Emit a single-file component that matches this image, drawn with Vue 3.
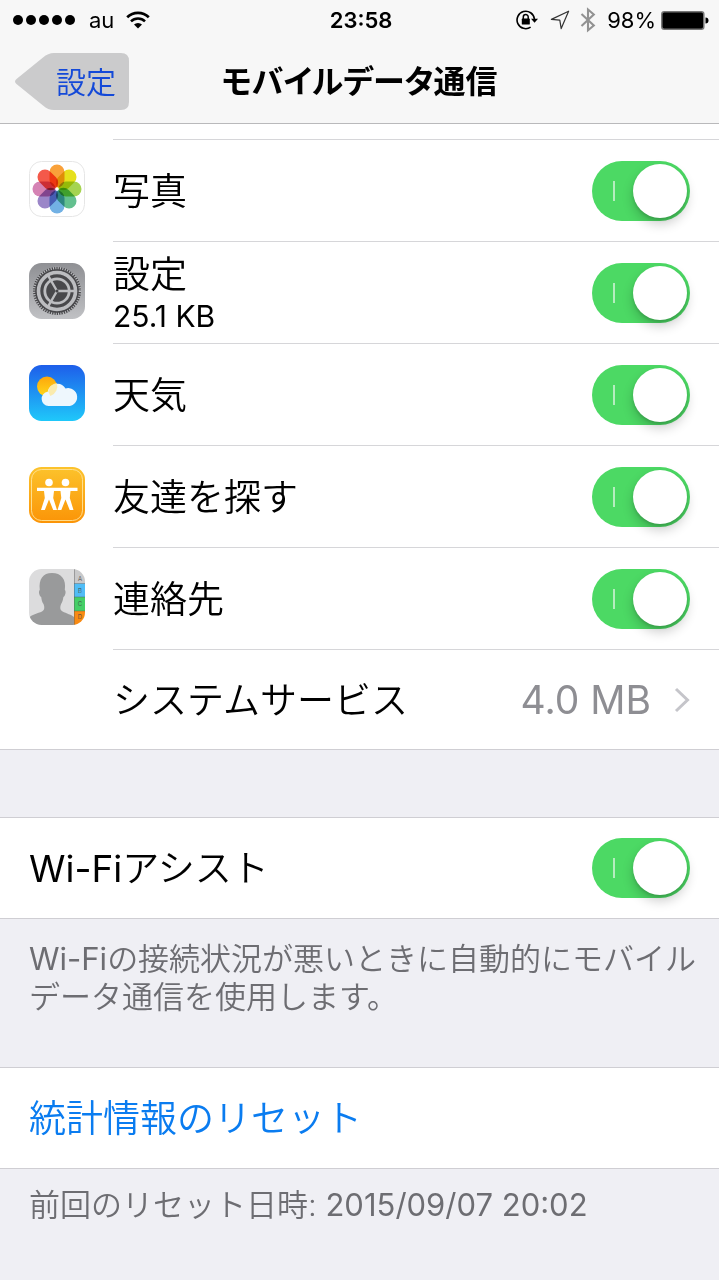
<template>
  <div class="screen">
    <header class="top-bar">
      <div class="status-bar">
        <div class="status-left">
          <div class="signal">
            <i v-for="n in 5" :key="n" class="signal-dot"></i>
          </div>
          <span class="carrier">au</span>
          <svg class="wifi" width="24" height="18" viewBox="0 0 24 18" fill="none" stroke="#000">
            <path d="M1.2 6.2a15.5 15.5 0 0 1 21.6 0" stroke-width="2.7" />
            <path d="M5 10.4a10 10 0 0 1 14 0" stroke-width="2.5" />
            <path d="M12 17.6l-4-4.1a5.8 5.8 0 0 1 8 0z" fill="#000" stroke="none" />
          </svg>
        </div>
        <span class="clock">23:58</span>
        <div class="status-right">
          <svg width="22" height="20" viewBox="0 0 22 20" fill="none" stroke="#000">
            <path d="M14.6 17.2A8.7 8.7 0 1 1 18.4 9" stroke-width="1.6" />
            <path d="M15 8.8h7l-3.5 4z" fill="#000" stroke="none" />
            <rect x="5.8" y="8.6" width="8" height="6" rx="0.6" fill="#000" stroke="none" />
            <path d="M7.3 9V7a2.4 2.4 0 0 1 4.9 0v2" stroke-width="1.5" />
          </svg>
          <svg class="location" width="20" height="20" viewBox="0 0 20 20" fill="none" stroke="#333" stroke-width="1.2">
            <path d="M18.6 1.2L1.4 9.4l8.4.8 1.4 8.4z" stroke-linejoin="round" />
          </svg>
          <svg class="bluetooth" width="16" height="26" viewBox="0 0 16 26" fill="none" stroke="#929292" stroke-width="2.1">
            <path d="M1.5 7l12.3 11.5L8 23.3V2.5l5.8 5L1.5 19" />
          </svg>
          <span class="percent">98%</span>
          <svg width="48" height="19" viewBox="0 0 48 19">
            <rect x="0.8" y="0.8" width="42" height="17.4" rx="2.5" fill="#000" stroke="#777" stroke-width="1.5" />
            <path d="M44.5 6.5q3 0 3 3t-3 3z" fill="#000" />
          </svg>
        </div>
      </div>
      <nav class="nav-bar">
        <button type="button" class="back">
          <svg class="back-shape" viewBox="0 0 114 57" preserveAspectRatio="none">
            <path
              d="M1.5 26L28 4.5Q33 0 39 0H106q8 0 8 8V49q0 8-8 8H39q-6 0-11-4.5L1.5 31q-3-2.5 0-5z"
              fill="#cbcbcc"
            />
          </svg>
          <span class="back-text">設定</span>
        </button>
        <h1>モバイルデータ通信</h1>
      </nav>
    </header>

    <main>
      <section class="group app-group">
        <div class="row-tail"><div class="row-tail-line"></div></div>
        <div v-for="app in apps" :key="app.id" class="app-row">
          <svg class="app-icon" width="56" height="56" viewBox="0 0 56 56">
            <defs>
              <linearGradient id="metal" x1="0" y1="0" x2="0" y2="1">
                <stop offset="0" stop-color="#8f9094" />
                <stop offset="1" stop-color="#c0c1c4" />
              </linearGradient>
              <linearGradient id="sky" x1="0" y1="0" x2="0" y2="1">
                <stop offset="0" stop-color="#1e5eea" />
                <stop offset="1" stop-color="#1fc8fa" />
              </linearGradient>
              <linearGradient id="orange" x1="0" y1="0" x2="0" y2="1">
                <stop offset="0" stop-color="#fcc32c" />
                <stop offset="1" stop-color="#fb9407" />
              </linearGradient>
              <linearGradient id="sun" x1="0" y1="0" x2="0" y2="1">
                <stop offset="0" stop-color="#fda60c" />
                <stop offset="1" stop-color="#ffd91a" />
              </linearGradient>
              <clipPath id="tile"><rect width="56" height="56" rx="12.5" /></clipPath>
            </defs>

            <g v-if="app.id === 'photos'">
              <rect x="0.5" y="0.5" width="55" height="55" rx="12" fill="#fff" stroke="#e6e6e6" />
              <g class="petals">
                <rect
                  v-for="(color, i) in petals"
                  :key="color"
                  x="20.5"
                  y="3.5"
                  width="15"
                  height="23"
                  rx="7.5"
                  :fill="color"
                  :transform="`rotate(${i * 45} 28 28)`"
                />
              </g>
              <circle cx="28" cy="28" r="1.5" fill="#fff" />
            </g>

            <g v-else-if="app.id === 'settings'">
              <rect width="56" height="56" rx="12.5" fill="url(#metal)" />
              <circle cx="28" cy="28" r="24" fill="#48484b" />
              <g fill="none" stroke="#bcbdc0">
                <circle cx="28" cy="28" r="23" stroke-width="2.4" stroke-dasharray="1.1 1.308" />
                <circle cx="28" cy="28" r="18.5" stroke-width="3.6" />
                <circle cx="28" cy="28" r="12.2" stroke-width="2.8" />
                <path d="M28 28H46M28 28L19 12.4M28 28L19 43.6" stroke-width="2.4" />
              </g>
              <circle cx="28" cy="28" r="1.5" fill="#48484b" />
            </g>

            <g v-else-if="app.id === 'weather'">
              <rect width="56" height="56" rx="12.5" fill="url(#sky)" />
              <circle cx="18" cy="21.5" r="10" fill="url(#sun)" />
              <path
                d="M19.5 41a7.2 7.2 0 0 1-.8-14.3A9.7 9.7 0 0 1 36.5 23.500 9 9 0 1 1 37.8 41z"
                fill="#eef7fd"
              />
              <path d="M19.2 26.6A9.7 9.7 0 0 1 27.7 18a10 10 0 0 1-6.3 12.9z" fill="#fbe9a5" opacity="0.9" />
            </g>

            <g v-else-if="app.id === 'friends'">
              <rect width="56" height="56" rx="12.5" fill="url(#orange)" />
              <rect x="2.5" y="2.5" width="51" height="51" rx="10" fill="none" stroke="#ffe39a" stroke-width="0.9" />
              <g fill="#fff">
                <circle cx="20" cy="15.5" r="3.8" />
                <circle cx="36.5" cy="15.5" r="3.8" />
                <path d="M8 20.8H48.5v3.2H41.5l-.7 7L44.5 43h-3.8l-4.2-10.5L32.3 43h-3.8L32.3 31l-.8-7H25l-.8 7L28 43h-3.8L20 32.5 15.8 43H12L15.8 31 15 24H8z" />
              </g>
            </g>

            <g v-else clip-path="url(#tile)">
              <rect width="56" height="56" fill="#dcdcdd" />
              <path
                d="M0 56v-7c2-3.5 9-4.5 13-6.5 3-1.5 2.5-5 1.5-7.5-1.5-2-2-4.5-2.3-7-2-1-3-6-1.4-7C9.5 10 14 4 23 4s14.5 6 12.8 17c1.6 1 .6 6-1.4 7-.3 2.5-1 5-2.3 7-1 2.5-1.5 6 1.5 7.5 3.5 2 9 3 12 6v7.5z"
                fill="#999a9b"
              />
              <rect x="45" width="11" height="14.5" fill="#c9c9ca" />
              <rect x="45" y="14.5" width="11" height="13.5" fill="#51bdf6" />
              <rect x="45" y="28" width="11" height="14" fill="#45cf67" />
              <rect x="45" y="42" width="11" height="14" fill="#f98b13" />
              <path d="M45.5 0V56M45 14.5H56M45 28H56M45 42H56" stroke="#555" stroke-opacity="0.4" />
              <g class="tab-letters">
                <text x="51" y="12">A</text>
                <text x="51" y="24">B</text>
                <text x="51" y="37">C</text>
                <text x="51" y="50">D</text>
              </g>
            </g>
          </svg>
          <div class="row-body">
            <label :for="app.id" class="row-label">
              {{ app.name }}
              <small v-if="app.usage" class="usage">{{ app.usage }}</small>
            </label>
            <input :id="app.id" v-model="app.enabled" type="checkbox" role="switch" class="switch" />
          </div>
        </div>
        <a href="#system" class="app-row system-row">
          <span class="row-body">
            <span class="row-label">システムサービス</span>
            <span class="total">4.0 MB</span>
            <svg width="16" height="26" viewBox="0 0 16 26" fill="none" stroke="#c5c5ca" stroke-width="3">
              <path d="M2 2l11.5 11L2 24" />
            </svg>
          </span>
        </a>
      </section>

      <section class="group plain-row">
        <label for="assist" class="row-label"><span class="latin">Wi-Fi</span>アシスト</label>
        <input id="assist" v-model="wifiAssist" type="checkbox" role="switch" class="switch" />
      </section>
      <p class="note assist-note"><span class="latin">Wi-Fi</span>の接続状況が悪いときに自動的にモバイルデータ通信を使用します。</p>

      <section class="group plain-row">
        <button type="button" class="reset">統計情報のリセット</button>
      </section>
      <p class="note">前回のリセット日時: <span class="latin">2015/09/07 20:02</span></p>
    </main>
  </div>
</template>

<script setup>
import { ref } from 'vue';

const apps = ref([
  { id: 'photos', name: '写真', enabled: true },
  { id: 'settings', name: '設定', usage: '25.1 KB', enabled: true },
  { id: 'weather', name: '天気', enabled: true },
  { id: 'friends', name: '友達を探す', enabled: true },
  { id: 'contacts', name: '連絡先', enabled: true }
]);

const wifiAssist = ref(true);

// clockwise, starting from the top petal
const petals = ['#f9a13a', '#e6e01c', '#a5d450', '#63c08f', '#72b1e4', '#9b86c8', '#d583b4', '#f4594a'];
</script>

<style>
body {
  margin: 0;
  background: #efeff4;
}
</style>

<style scoped>
.screen {
  min-height: 100vh;
  background: #efeff4;
  color: #000;
  font-family: Inter, 'Noto Sans CJK JP', sans-serif;
  font-weight: 350;
}

.latin {
  font-weight: 400;
}

.top-bar {
  background: #f7f7f7;
  border-bottom: 1px solid #b9b9bb;
}

.status-bar {
  display: grid;
  grid-template-columns: 1fr auto 1fr;
  align-items: center;
  height: 40px;
  padding: 0 10px 0 13px;
  font-size: 22px;
  font-weight: 400;
}

.status-left,
.status-right {
  display: flex;
  align-items: center;
}

.status-right {
  justify-content: flex-end;
}

.signal {
  display: flex;
  gap: 3px;
  margin-right: 14px;
}

.signal-dot {
  width: 10px;
  height: 10px;
  border-radius: 50%;
  background: #000;
}

.wifi {
  margin-left: 12px;
}

.clock {
  font-weight: 600;
}

.location {
  margin-left: 12px;
}

.bluetooth {
  margin: 0 11px 0 10px;
}

.percent {
  margin-right: 5px;
}

.nav-bar {
  display: grid;
  grid-template-columns: 1fr auto 1fr;
  align-items: center;
  height: 83px;
  padding: 0 15px;
}

.back {
  position: relative;
  justify-self: start;
  height: 57px;
  padding: 0 13px 4px 41px;
  border: 0;
  background: none;
  color: #1449d8;
  font: inherit;
  font-size: 30px;
}

.back-shape {
  position: absolute;
  inset: 0;
  width: 100%;
  height: 100%;
}

.back-text {
  position: relative;
}

h1 {
  margin: 0;
  font-size: 32px;
  font-weight: 700;
  line-height: 40px;
  font-feature-settings: 'palt';
}

.group {
  background: #fff;
  border-bottom: 1px solid #cfced3;
}

.row-tail {
  padding: 15px 0 0 113px;
}

.row-tail-line {
  height: 1px;
  background: #d6d6d9;
}

.app-row {
  display: flex;
  align-items: center;
  padding-left: 29px;
}

.app-icon {
  flex: none;
  margin: 0 28px 4px 0;
}

.petals {
  isolation: isolate;
}

.petals rect {
  mix-blend-mode: multiply;
}

.tab-letters {
  fill: #444;
  font-size: 6px;
  text-anchor: middle;
}

.row-body {
  display: flex;
  flex: 1;
  align-items: center;
  min-height: 101px;
  padding-right: 29px;
  border-bottom: 1px solid #d6d6d9;
}

.row-label {
  flex: 1;
  padding-top: 2px;
  font-size: 37px;
  line-height: 44px;
}

.usage {
  display: block;
  font-size: 30px;
  font-weight: 400;
  line-height: 38px;
}

.system-row {
  padding-left: 113px;
  color: inherit;
  text-decoration: none;
}

.system-row .row-body {
  min-height: 99px;
  border-bottom: 0;
}

.total {
  margin-right: 23px;
  color: #8e8e93;
  font-size: 39px;
  font-weight: 400;
}

.switch {
  flex: none;
  display: flex;
  align-items: center;
  justify-content: space-between;
  box-sizing: border-box;
  width: 98px;
  height: 60px;
  margin: 0;
  padding: 3px 3px 3px 21px;
  appearance: none;
  border-radius: 30px;
  background: #d8d8dc;
}

.switch:checked {
  background: #4cd964;
}

.switch::before {
  content: '';
  width: 2px;
  height: 20px;
  background: #b5edbf;
}

.switch::after {
  content: '';
  width: 54px;
  height: 54px;
  border-radius: 50%;
  background: #fff;
  box-shadow: 0 6px 12px rgba(0, 0, 0, 0.2), 0 2px 3px rgba(0, 0, 0, 0.12);
}

.switch:not(:checked) {
  flex-direction: row-reverse;
  padding: 3px 21px 3px 3px;
}

.plain-row {
  display: flex;
  align-items: center;
  min-height: 100px;
  padding: 0 29px;
  border-top: 1px solid #cfced3;
}

.app-group {
  margin-bottom: 67px;
}

.reset {
  padding: 2px 0 0;
  border: 0;
  background: none;
  color: #0a7cf0;
  font: inherit;
  font-size: 37px;
  line-height: 44px;
}

.note {
  margin: 0;
  padding: 17px 20px 17px 29px;
  color: #6d6d72;
  font-size: 31px;
  line-height: 38px;
}

.assist-note {
  padding-top: 21px;
  padding-bottom: 51px;
}
</style>
